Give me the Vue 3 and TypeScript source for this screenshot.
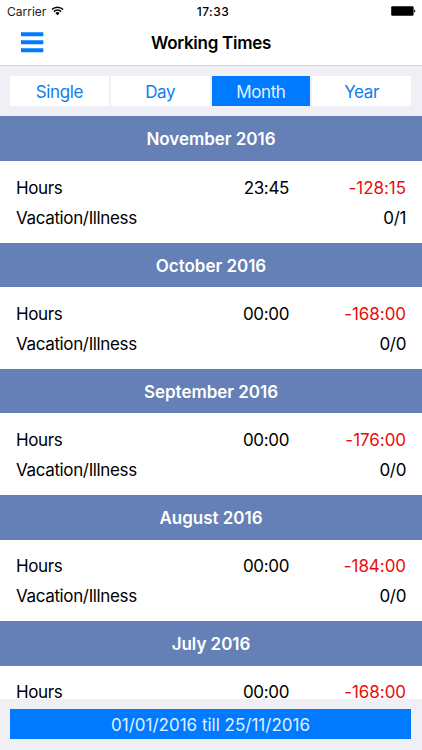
<script setup lang="ts">
import { ref } from 'vue'

interface MonthEntry {
  title: string
  hours: string
  balance: string
  absence: string
}

const tabs: string[] = ['Single', 'Day', 'Month', 'Year']
const active = ref<string>('Month')

const months: MonthEntry[] = [
  { title: 'November 2016', hours: '23:45', balance: '-128:15', absence: '0/1' },
  { title: 'October 2016', hours: '00:00', balance: '-168:00', absence: '0/0' },
  { title: 'September 2016', hours: '00:00', balance: '-176:00', absence: '0/0' },
  { title: 'August 2016', hours: '00:00', balance: '-184:00', absence: '0/0' },
  { title: 'July 2016', hours: '00:00', balance: '-168:00', absence: '0/0' },
]
</script>

<template>
  <div class="screen">
    <header class="top">
      <div class="status">
        <div class="carrier">
          <span>Carrier</span>
          <svg class="wifi" width="13" height="10" viewBox="0 0 13 10">
            <path d="M0.9 3.5a8 8 0 0 1 11.2 0M2.9 5.6a5.1 5.1 0 0 1 7.2 0" fill="none" stroke="#000" stroke-width="1.5" />
            <path d="M6.5 9.2L4.4 7.1a3 3 0 0 1 4.2 0z" fill="#000" />
          </svg>
        </div>
        <span class="clock">17:33</span>
        <div class="power">
          <svg width="25" height="10" viewBox="0 0 25 10">
            <rect x="0.2" y="0.2" width="22.4" height="9.5" rx="1.2" fill="#000" />
            <path d="M23.2 3.4c1.6 0.3 1.6 2.9 0 3.2z" fill="#000" />
          </svg>
        </div>
      </div>
      <div class="nav">
        <button class="menu" aria-label="Menu">
          <svg width="23" height="21" viewBox="0 0 23 21">
            <path d="M0 0.2h22.3v4H0zM0 8.2h22.3v4H0zM0 16.2h22.3v4H0z" fill="#007aff" />
          </svg>
        </button>
        <h1>Working Times</h1>
        <span></span>
      </div>
    </header>
    <div class="tabs">
      <button v-for="t in tabs" :key="t" class="tab" :class="{ on: t === active }" @click="active = t">{{ t }}</button>
    </div>
    <main class="list">
      <section v-for="m in months" :key="m.title" class="month">
        <h2>{{ m.title }}</h2>
        <div class="rows">
          <div class="row">
            <span class="label">Hours</span>
            <span class="num">{{ m.hours }}</span>
            <span class="num neg">{{ m.balance }}</span>
          </div>
          <div class="row">
            <span class="label">Vacation/Illness</span>
            <span></span>
            <span class="num">{{ m.absence }}</span>
          </div>
        </div>
      </section>
    </main>
    <footer class="bottom">
      <button class="range">01/01/2016 till 25/11/2016</button>
    </footer>
  </div>
</template>

<style>
body {
  background: #efeff5;
}
</style>

<style scoped>
.screen {
  width: 422px;
  height: 750px;
  display: flex;
  flex-direction: column;
  overflow: hidden;
  background: #efeff5;
  color: #000;
  font-family: Inter, 'Liberation Sans', sans-serif;
  font-size: 17px;
  letter-spacing: -0.36px;
}
button {
  border: 0;
  padding: 0;
  background: none;
  font: inherit;
  letter-spacing: inherit;
}
.top {
  flex: none;
  height: 65px;
  background: #fff;
  border-bottom: 1px solid #d3d3d7;
}
.status {
  display: grid;
  grid-template-columns: 1fr auto 1fr;
  align-items: center;
  height: 22px;
  padding: 0 6px 0 7px;
  font-size: 12px;
  letter-spacing: 0;
}
.carrier {
  display: flex;
  align-items: center;
  gap: 5px;
  color: #222;
}
.wifi {
  margin-top: -1px;
}
.clock {
  font-weight: 500;
  letter-spacing: 0.5px;
  padding-left: 3px;
}
.power {
  display: flex;
  justify-content: flex-end;
}
.nav {
  display: grid;
  grid-template-columns: 1fr auto 1fr;
  align-items: center;
  height: 42px;
  padding: 0 21px;
}
.menu {
  display: flex;
  justify-self: start;
  margin-top: -2px;
}
h1 {
  margin: 0;
  font-size: 17px;
  font-weight: 600;
  letter-spacing: -0.27px;
  line-height: 42px;
}
.tabs {
  flex: none;
  display: grid;
  grid-template-columns: repeat(4, 1fr);
  gap: 2px;
  height: 30.5px;
  padding: 9.7px 11px 10.3px 10px;
}
.tab {
  background: #fff;
  color: #0f7cf0;
  padding-top: 2px;
  letter-spacing: -0.4px;
}
.tab.on {
  background: #007aff;
  color: #e2f0ff;
}
.list {
  flex: 1;
  min-height: 0;
  overflow: hidden;
  background: #fff;
}
.month {
  height: 126.2px;
}
h2 {
  margin: 0;
  height: 44.5px;
  line-height: 46px;
  background: #6480b6;
  color: #fff;
  text-align: center;
  font-size: 17px;
  font-weight: 600;
  letter-spacing: -0.03px;
}
.rows {
  padding: 11.6px 16px 0;
}
.row {
  display: grid;
  grid-template-columns: 150px 123px 1fr;
  height: 30.3px;
  line-height: 31px;
}
.num {
  text-align: right;
}
.neg {
  color: #ea0c0c;
  letter-spacing: -0.05px;
}
.bottom {
  flex: none;
  display: flex;
  height: 30.3px;
  padding: 10px 11px 11px 10px;
}
.range {
  flex: 1;
  padding-top: 2px;
  background: #007aff;
  color: #e2f0ff;
  letter-spacing: 0;
}
</style>
